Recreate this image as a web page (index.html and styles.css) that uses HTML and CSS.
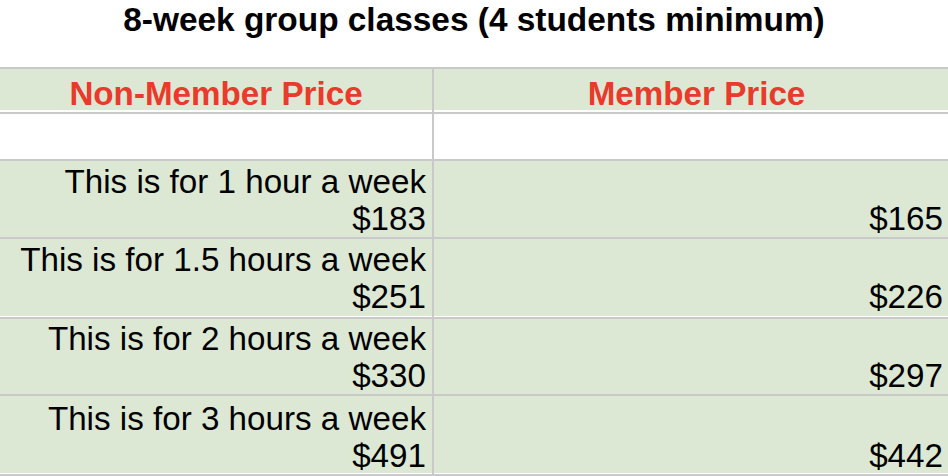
FILE: index.html
```html
<!DOCTYPE html>
<html lang="en">
<head>
<meta charset="utf-8">
<title>8-week group classes</title>
<link rel="stylesheet" href="styles.css">
</head>
<body>
  <h1 class="title">8-week group classes (4 students minimum)</h1>
  <div class="sheet">
    <div class="row head sep2">
      <div class="cell left center">Non-Member Price</div>
      <div class="cell right center shift">Member Price</div>
    </div>
    <div class="row blank">
      <div class="cell left"></div>
      <div class="cell right"></div>
    </div>
    <div class="row price h76">
      <div class="cell left"><span>This is for 1 hour a week</span><span>$183</span></div>
      <div class="cell right"><span>$165</span></div>
    </div>
    <div class="row price h78 sep1 up">
      <div class="cell left"><span>This is for 1.5 hours a week</span><span>$251</span></div>
      <div class="cell right"><span>$226</span></div>
    </div>
    <div class="row price h75">
      <div class="cell left"><span>This is for 2 hours a week</span><span>$330</span></div>
      <div class="cell right"><span>$297</span></div>
    </div>
    <div class="row price h78 sep1">
      <div class="cell left"><span>This is for 3 hours a week</span><span>$491</span></div>
      <div class="cell right"><span>$442</span></div>
    </div>
  </div>
</body>
</html>
```

FILE: styles.css
```css
html, body {
  margin: 0;
  padding: 0;
  background: #ffffff;
}

body {
  font-family: "Liberation Sans", Arial, Helvetica, sans-serif;
  color: #000000;
  width: 948px;
  overflow: hidden;
}

.title {
  margin: 0;
  height: 67px;
  padding-top: 1px;
  box-sizing: border-box;
  font-size: 33.4px;
  font-weight: bold;
  line-height: 37px;
  text-align: center;
  white-space: nowrap;
}

.sheet {
  border-top: 2px solid #c9c9c9;
}

.row {
  display: grid;
  grid-template-columns: 434px 1fr;
  border-bottom: 2px solid #c9c9c9;
  box-sizing: content-box;
}

.row.head {
  height: 43px;
  background: #dce8d4;
}

.row.blank {
  height: 45px;
  background: #ffffff;
}

.row.price {
  background: #dce8d4;
}

.h75 { height: 75px; }
.h76 { height: 76px; }
.h78 { height: 78px; }

.sep1 { box-shadow: inset 0 -1px 0 #ffffff; }
.sep2 { box-shadow: inset 0 -2px 0 #ffffff; }

.cell {
  display: flex;
  flex-direction: column;
  justify-content: flex-end;
  align-items: flex-end;
  font-size: 33.2px;
  line-height: 37px;
  white-space: nowrap;
  text-align: right;
}

.row.up .cell {
  padding-bottom: 2px;
}

.cell.left {
  border-right: 2px solid #c9c9c9;
  padding-right: 6px;
}

.cell.right {
  padding-right: 5px;
}

.cell.center {
  align-items: center;
  padding-right: 0;
  font-weight: bold;
  color: #e93a2b;
}

.cell.shift {
  padding-left: 11px;
}
```
